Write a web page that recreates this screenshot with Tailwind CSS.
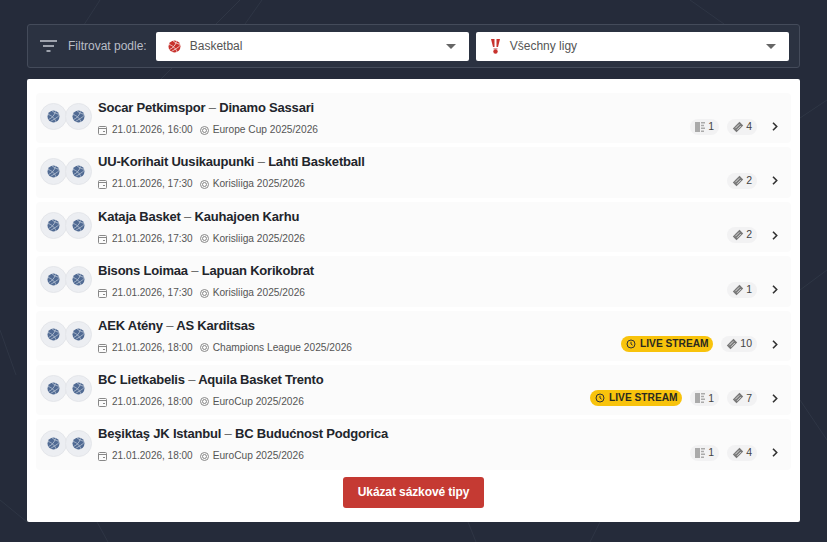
<!DOCTYPE html>
<html lang="cs">
<head>
<meta charset="utf-8">
<script src="https://cdn.jsdelivr.net/npm/@tailwindcss/browser@4"></script>
<title>Filtr</title>
</head>
<body class="relative w-[827px] h-[542px] overflow-hidden bg-[#252b3a] font-['Liberation_Sans',Arial,sans-serif]">
<svg class="absolute inset-0" width="827" height="542" fill="none" stroke="#2f3645" stroke-width="1">
  <path d="M60 62 L100 0"/><path d="M240 0 L160 80"/><path d="M262 0 L245 24"/><path d="M690 0 L724 24"/>
  <path d="M800 118 L827 100"/><path d="M800 400 L827 440"/><path d="M0 330 L16 375"/><path d="M800 290 L827 270"/>
  <path d="M97 522 L108 542"/><path d="M468 522 L476 542"/><path d="M600 522 L590 542"/><path d="M0 500 L27 522"/>
</svg>
<main class="relative px-[27px] pt-[24px]">
  <section class="h-[44px] rounded-[3px] border border-[#444b5a] bg-[#2b3241] flex items-center pl-[12px] pr-[10px]">
    <svg class="w-[17px] h-[14px] shrink-0" viewBox="0 0 17 14" fill="none" stroke="#c5c9d1" stroke-width="1.5"><path d="M0 2h17M3 7h11M6.5 12h4"/></svg>
    <span class="ml-[11px] text-[12px] text-[#b9bdc6] whitespace-nowrap">Filtrovat podle:</span>
    <div class="ml-[9px] flex gap-[7px] flex-1">
      <div class="w-[313px] h-[29px] bg-white rounded-[2px] flex items-center pl-[12px] pr-[13px]">
        <svg class="w-[13px] h-[13px]" viewBox="0 0 13 13" fill="none"><circle cx="6.5" cy="6.5" r="6" fill="#c8322d"/><path d="M1.5 9.5c3-1 6-4 7-8.2M3.5 11.5c3-2 7-4 8.5-6M1 4.5c3 .5 7 4 8 7.5M5 .8c1 1 4 3 7 3.5" stroke="#fff" stroke-width=".7"/></svg>
        <span class="ml-[9px] text-[12px] text-[#555]">Basketbal</span>
        <span class="ml-auto w-0 h-0 border-x-[5px] border-x-transparent border-t-[5px] border-t-[#666]"></span>
      </div>
      <div class="w-[313px] h-[29px] bg-white rounded-[2px] flex items-center pl-[14px] pr-[13px]">
        <svg class="w-[11px] h-[15px]" viewBox="0 0 11 15" fill="#c8322d"><path d="M1 0h3.5v8H3zM6.5 0H10L8 8H6.5z"/><rect x="3.5" y="9" width="4" height="1.5" fill="#d9a0a0"/><circle cx="5.5" cy="12.5" r="2.2"/></svg>
        <span class="ml-[9px] text-[12px] text-[#555]">Všechny ligy</span>
        <span class="ml-auto w-0 h-0 border-x-[5px] border-x-transparent border-t-[5px] border-t-[#666]"></span>
      </div>
    </div>
  </section>

  <section class="mt-[11px] h-[443px] bg-white rounded-[2px] px-[9px] pt-[14px] flex flex-col">
    <div class="flex flex-col gap-[4px]">

      <article class="h-[50.4px] bg-[#fbfbfb] rounded-[4px] flex pl-[4px] pr-[13px]">
        <div class="flex items-center -mt-[3px] -space-x-[2px]">
          <span class="w-[27px] h-[27px] rounded-full bg-[#eceef2] border border-[#e4e6ea] flex items-center justify-center"><svg class="w-[13px] h-[13px]" viewBox="0 0 13 13" fill="none"><circle cx="6.5" cy="6.5" r="6" fill="#506a93"/><path d="M1.5 9.5c3-1 6-4 7-8.2M3.5 11.5c3-2 7-4 8.5-6M1 4.5c3 .5 7 4 8 7.5M5 .8c1 1 4 3 7 3.5" stroke="#c9d2e0" stroke-width=".7"/></svg></span>
          <span class="w-[27px] h-[27px] rounded-full bg-[#eceef2] border border-[#e4e6ea] flex items-center justify-center"><svg class="w-[13px] h-[13px]" viewBox="0 0 13 13" fill="none"><circle cx="6.5" cy="6.5" r="6" fill="#506a93"/><path d="M1.5 9.5c3-1 6-4 7-8.2M3.5 11.5c3-2 7-4 8.5-6M1 4.5c3 .5 7 4 8 7.5M5 .8c1 1 4 3 7 3.5" stroke="#c9d2e0" stroke-width=".7"/></svg></span>
        </div>
        <div class="ml-[6px] pt-[6px]">
          <h3 class="text-[13px] tracking-[-0.2px] leading-[18px] font-bold text-[#22252b] whitespace-nowrap">Socar Petkimspor <span class="font-normal text-[#666]">–</span> Dinamo Sassari</h3>
          <p class="mt-[6px] flex items-center text-[10px] leading-[14px] text-[#555] whitespace-nowrap">
            <svg class="w-[9px] h-[10px] mr-[5px]" viewBox="0 0 9 10" fill="none" stroke="#888"><rect x=".5" y="1.5" width="8" height="8" rx="1"/><path d="M.5 3.5h8M5 6.5h2"/></svg>21.01.2026, 16:00
            <svg class="w-[9px] h-[9px] ml-[7px] mr-[4px]" viewBox="0 0 9 9" fill="none" stroke="#888"><circle cx="4.5" cy="4.5" r="4"/><circle cx="4.5" cy="4.5" r="2"/></svg><span class="text-[10.2px]">Europe Cup 2025/2026</span>
          </p>
        </div>
        <div class="ml-auto mt-[25px] flex items-center h-[17px] gap-[8px]">
          <span class="h-[16px] px-[5px] rounded-full bg-[#f2f2f3] flex items-center gap-[3px] text-[10.5px] text-[#444]"><svg class="w-[10px] h-[10px]" viewBox="0 0 10 10" fill="#aaa"><path d="M0 0h5v10H0zM6 0h4v1.5H6zM6 2.8h3V4.3H6zM6 5.6h4v1.5H6zM6 8.5h3V10H6z"/></svg>1</span>
          <span class="h-[16px] px-[5px] rounded-full bg-[#f2f2f3] flex items-center gap-[2px] text-[10.5px] text-[#444]"><svg class="w-[12px] h-[12px]" viewBox="0 0 12 12" fill="#777"><path d="M7.5.8 11.2 4.5 4.5 11.2.8 7.5z"/><path d="M3.3 7.3 7.3 3.3M5 8.8 8.8 5" stroke="#f2f2f3" stroke-width=".8"/></svg>4</span>
          <svg class="ml-[7px] w-[6px] h-[9px]" viewBox="0 0 6 9" fill="none" stroke="#333" stroke-width="1.6"><path d="M1 .8 4.7 4.5 1 8.2"/></svg>
        </div>
      </article>

      <article class="h-[50.4px] bg-[#fbfbfb] rounded-[4px] flex pl-[4px] pr-[13px]">
        <div class="flex items-center -mt-[3px] -space-x-[2px]">
          <span class="w-[27px] h-[27px] rounded-full bg-[#eceef2] border border-[#e4e6ea] flex items-center justify-center"><svg class="w-[13px] h-[13px]" viewBox="0 0 13 13" fill="none"><circle cx="6.5" cy="6.5" r="6" fill="#506a93"/><path d="M1.5 9.5c3-1 6-4 7-8.2M3.5 11.5c3-2 7-4 8.5-6M1 4.5c3 .5 7 4 8 7.5M5 .8c1 1 4 3 7 3.5" stroke="#c9d2e0" stroke-width=".7"/></svg></span>
          <span class="w-[27px] h-[27px] rounded-full bg-[#eceef2] border border-[#e4e6ea] flex items-center justify-center"><svg class="w-[13px] h-[13px]" viewBox="0 0 13 13" fill="none"><circle cx="6.5" cy="6.5" r="6" fill="#506a93"/><path d="M1.5 9.5c3-1 6-4 7-8.2M3.5 11.5c3-2 7-4 8.5-6M1 4.5c3 .5 7 4 8 7.5M5 .8c1 1 4 3 7 3.5" stroke="#c9d2e0" stroke-width=".7"/></svg></span>
        </div>
        <div class="ml-[6px] pt-[6px]">
          <h3 class="text-[13px] tracking-[-0.2px] leading-[18px] font-bold text-[#22252b] whitespace-nowrap">UU-Korihait Uusikaupunki <span class="font-normal text-[#666]">–</span> Lahti Basketball</h3>
          <p class="mt-[6px] flex items-center text-[10px] leading-[14px] text-[#555] whitespace-nowrap">
            <svg class="w-[9px] h-[10px] mr-[5px]" viewBox="0 0 9 10" fill="none" stroke="#888"><rect x=".5" y="1.5" width="8" height="8" rx="1"/><path d="M.5 3.5h8M5 6.5h2"/></svg>21.01.2026, 17:30
            <svg class="w-[9px] h-[9px] ml-[7px] mr-[4px]" viewBox="0 0 9 9" fill="none" stroke="#888"><circle cx="4.5" cy="4.5" r="4"/><circle cx="4.5" cy="4.5" r="2"/></svg><span class="text-[10.2px]">Korisliiga 2025/2026</span>
          </p>
        </div>
        <div class="ml-auto mt-[25px] flex items-center h-[17px] gap-[8px]">
          <span class="h-[16px] px-[5px] rounded-full bg-[#f2f2f3] flex items-center gap-[2px] text-[10.5px] text-[#444]"><svg class="w-[12px] h-[12px]" viewBox="0 0 12 12" fill="#777"><path d="M7.5.8 11.2 4.5 4.5 11.2.8 7.5z"/><path d="M3.3 7.3 7.3 3.3M5 8.8 8.8 5" stroke="#f2f2f3" stroke-width=".8"/></svg>2</span>
          <svg class="ml-[7px] w-[6px] h-[9px]" viewBox="0 0 6 9" fill="none" stroke="#333" stroke-width="1.6"><path d="M1 .8 4.7 4.5 1 8.2"/></svg>
        </div>
      </article>

      <article class="h-[50.4px] bg-[#fbfbfb] rounded-[4px] flex pl-[4px] pr-[13px]">
        <div class="flex items-center -mt-[3px] -space-x-[2px]">
          <span class="w-[27px] h-[27px] rounded-full bg-[#eceef2] border border-[#e4e6ea] flex items-center justify-center"><svg class="w-[13px] h-[13px]" viewBox="0 0 13 13" fill="none"><circle cx="6.5" cy="6.5" r="6" fill="#506a93"/><path d="M1.5 9.5c3-1 6-4 7-8.2M3.5 11.5c3-2 7-4 8.5-6M1 4.5c3 .5 7 4 8 7.5M5 .8c1 1 4 3 7 3.5" stroke="#c9d2e0" stroke-width=".7"/></svg></span>
          <span class="w-[27px] h-[27px] rounded-full bg-[#eceef2] border border-[#e4e6ea] flex items-center justify-center"><svg class="w-[13px] h-[13px]" viewBox="0 0 13 13" fill="none"><circle cx="6.5" cy="6.5" r="6" fill="#506a93"/><path d="M1.5 9.5c3-1 6-4 7-8.2M3.5 11.5c3-2 7-4 8.5-6M1 4.5c3 .5 7 4 8 7.5M5 .8c1 1 4 3 7 3.5" stroke="#c9d2e0" stroke-width=".7"/></svg></span>
        </div>
        <div class="ml-[6px] pt-[6px]">
          <h3 class="text-[13px] tracking-[-0.2px] leading-[18px] font-bold text-[#22252b] whitespace-nowrap">Kataja Basket <span class="font-normal text-[#666]">–</span> Kauhajoen Karhu</h3>
          <p class="mt-[6px] flex items-center text-[10px] leading-[14px] text-[#555] whitespace-nowrap">
            <svg class="w-[9px] h-[10px] mr-[5px]" viewBox="0 0 9 10" fill="none" stroke="#888"><rect x=".5" y="1.5" width="8" height="8" rx="1"/><path d="M.5 3.5h8M5 6.5h2"/></svg>21.01.2026, 17:30
            <svg class="w-[9px] h-[9px] ml-[7px] mr-[4px]" viewBox="0 0 9 9" fill="none" stroke="#888"><circle cx="4.5" cy="4.5" r="4"/><circle cx="4.5" cy="4.5" r="2"/></svg><span class="text-[10.2px]">Korisliiga 2025/2026</span>
          </p>
        </div>
        <div class="ml-auto mt-[25px] flex items-center h-[17px] gap-[8px]">
          <span class="h-[16px] px-[5px] rounded-full bg-[#f2f2f3] flex items-center gap-[2px] text-[10.5px] text-[#444]"><svg class="w-[12px] h-[12px]" viewBox="0 0 12 12" fill="#777"><path d="M7.5.8 11.2 4.5 4.5 11.2.8 7.5z"/><path d="M3.3 7.3 7.3 3.3M5 8.8 8.8 5" stroke="#f2f2f3" stroke-width=".8"/></svg>2</span>
          <svg class="ml-[7px] w-[6px] h-[9px]" viewBox="0 0 6 9" fill="none" stroke="#333" stroke-width="1.6"><path d="M1 .8 4.7 4.5 1 8.2"/></svg>
        </div>
      </article>

      <article class="h-[50.4px] bg-[#fbfbfb] rounded-[4px] flex pl-[4px] pr-[13px]">
        <div class="flex items-center -mt-[3px] -space-x-[2px]">
          <span class="w-[27px] h-[27px] rounded-full bg-[#eceef2] border border-[#e4e6ea] flex items-center justify-center"><svg class="w-[13px] h-[13px]" viewBox="0 0 13 13" fill="none"><circle cx="6.5" cy="6.5" r="6" fill="#506a93"/><path d="M1.5 9.5c3-1 6-4 7-8.2M3.5 11.5c3-2 7-4 8.5-6M1 4.5c3 .5 7 4 8 7.5M5 .8c1 1 4 3 7 3.5" stroke="#c9d2e0" stroke-width=".7"/></svg></span>
          <span class="w-[27px] h-[27px] rounded-full bg-[#eceef2] border border-[#e4e6ea] flex items-center justify-center"><svg class="w-[13px] h-[13px]" viewBox="0 0 13 13" fill="none"><circle cx="6.5" cy="6.5" r="6" fill="#506a93"/><path d="M1.5 9.5c3-1 6-4 7-8.2M3.5 11.5c3-2 7-4 8.5-6M1 4.5c3 .5 7 4 8 7.5M5 .8c1 1 4 3 7 3.5" stroke="#c9d2e0" stroke-width=".7"/></svg></span>
        </div>
        <div class="ml-[6px] pt-[6px]">
          <h3 class="text-[13px] tracking-[-0.2px] leading-[18px] font-bold text-[#22252b] whitespace-nowrap">Bisons Loimaa <span class="font-normal text-[#666]">–</span> Lapuan Korikobrat</h3>
          <p class="mt-[6px] flex items-center text-[10px] leading-[14px] text-[#555] whitespace-nowrap">
            <svg class="w-[9px] h-[10px] mr-[5px]" viewBox="0 0 9 10" fill="none" stroke="#888"><rect x=".5" y="1.5" width="8" height="8" rx="1"/><path d="M.5 3.5h8M5 6.5h2"/></svg>21.01.2026, 17:30
            <svg class="w-[9px] h-[9px] ml-[7px] mr-[4px]" viewBox="0 0 9 9" fill="none" stroke="#888"><circle cx="4.5" cy="4.5" r="4"/><circle cx="4.5" cy="4.5" r="2"/></svg><span class="text-[10.2px]">Korisliiga 2025/2026</span>
          </p>
        </div>
        <div class="ml-auto mt-[25px] flex items-center h-[17px] gap-[8px]">
          <span class="h-[16px] px-[5px] rounded-full bg-[#f2f2f3] flex items-center gap-[2px] text-[10.5px] text-[#444]"><svg class="w-[12px] h-[12px]" viewBox="0 0 12 12" fill="#777"><path d="M7.5.8 11.2 4.5 4.5 11.2.8 7.5z"/><path d="M3.3 7.3 7.3 3.3M5 8.8 8.8 5" stroke="#f2f2f3" stroke-width=".8"/></svg>1</span>
          <svg class="ml-[7px] w-[6px] h-[9px]" viewBox="0 0 6 9" fill="none" stroke="#333" stroke-width="1.6"><path d="M1 .8 4.7 4.5 1 8.2"/></svg>
        </div>
      </article>

      <article class="h-[50.4px] bg-[#fbfbfb] rounded-[4px] flex pl-[4px] pr-[13px]">
        <div class="flex items-center -mt-[3px] -space-x-[2px]">
          <span class="w-[27px] h-[27px] rounded-full bg-[#eceef2] border border-[#e4e6ea] flex items-center justify-center"><svg class="w-[13px] h-[13px]" viewBox="0 0 13 13" fill="none"><circle cx="6.5" cy="6.5" r="6" fill="#506a93"/><path d="M1.5 9.5c3-1 6-4 7-8.2M3.5 11.5c3-2 7-4 8.5-6M1 4.5c3 .5 7 4 8 7.5M5 .8c1 1 4 3 7 3.5" stroke="#c9d2e0" stroke-width=".7"/></svg></span>
          <span class="w-[27px] h-[27px] rounded-full bg-[#eceef2] border border-[#e4e6ea] flex items-center justify-center"><svg class="w-[13px] h-[13px]" viewBox="0 0 13 13" fill="none"><circle cx="6.5" cy="6.5" r="6" fill="#506a93"/><path d="M1.5 9.5c3-1 6-4 7-8.2M3.5 11.5c3-2 7-4 8.5-6M1 4.5c3 .5 7 4 8 7.5M5 .8c1 1 4 3 7 3.5" stroke="#c9d2e0" stroke-width=".7"/></svg></span>
        </div>
        <div class="ml-[6px] pt-[6px]">
          <h3 class="text-[13px] tracking-[-0.2px] leading-[18px] font-bold text-[#22252b] whitespace-nowrap">AEK Atény <span class="font-normal text-[#666]">–</span> AS Karditsas</h3>
          <p class="mt-[6px] flex items-center text-[10px] leading-[14px] text-[#555] whitespace-nowrap">
            <svg class="w-[9px] h-[10px] mr-[5px]" viewBox="0 0 9 10" fill="none" stroke="#888"><rect x=".5" y="1.5" width="8" height="8" rx="1"/><path d="M.5 3.5h8M5 6.5h2"/></svg>21.01.2026, 18:00
            <svg class="w-[9px] h-[9px] ml-[7px] mr-[4px]" viewBox="0 0 9 9" fill="none" stroke="#888"><circle cx="4.5" cy="4.5" r="4"/><circle cx="4.5" cy="4.5" r="2"/></svg><span class="text-[10.2px]">Champions League 2025/2026</span>
          </p>
        </div>
        <div class="ml-auto mt-[25px] flex items-center h-[17px] gap-[8px]">
          <span class="h-[16px] w-[92px] -mt-px rounded-full bg-[#f8c30c] flex items-center justify-center gap-[4px] text-[10.2px] font-bold text-[#2a2a20] whitespace-nowrap"><svg class="w-[10px] h-[10px]" viewBox="0 0 10 10" fill="none" stroke="#333" stroke-width="1"><circle cx="5" cy="5" r="4"/><path d="M5 2.8V5l1.6 1.2"/></svg>LIVE STREAM</span>
          <span class="h-[16px] px-[5px] rounded-full bg-[#f2f2f3] flex items-center gap-[2px] text-[10.5px] text-[#444]"><svg class="w-[12px] h-[12px]" viewBox="0 0 12 12" fill="#777"><path d="M7.5.8 11.2 4.5 4.5 11.2.8 7.5z"/><path d="M3.3 7.3 7.3 3.3M5 8.8 8.8 5" stroke="#f2f2f3" stroke-width=".8"/></svg>10</span>
          <svg class="ml-[7px] w-[6px] h-[9px]" viewBox="0 0 6 9" fill="none" stroke="#333" stroke-width="1.6"><path d="M1 .8 4.7 4.5 1 8.2"/></svg>
        </div>
      </article>

      <article class="h-[50.4px] bg-[#fbfbfb] rounded-[4px] flex pl-[4px] pr-[13px]">
        <div class="flex items-center -mt-[3px] -space-x-[2px]">
          <span class="w-[27px] h-[27px] rounded-full bg-[#eceef2] border border-[#e4e6ea] flex items-center justify-center"><svg class="w-[13px] h-[13px]" viewBox="0 0 13 13" fill="none"><circle cx="6.5" cy="6.5" r="6" fill="#506a93"/><path d="M1.5 9.5c3-1 6-4 7-8.2M3.5 11.5c3-2 7-4 8.5-6M1 4.5c3 .5 7 4 8 7.5M5 .8c1 1 4 3 7 3.5" stroke="#c9d2e0" stroke-width=".7"/></svg></span>
          <span class="w-[27px] h-[27px] rounded-full bg-[#eceef2] border border-[#e4e6ea] flex items-center justify-center"><svg class="w-[13px] h-[13px]" viewBox="0 0 13 13" fill="none"><circle cx="6.5" cy="6.5" r="6" fill="#506a93"/><path d="M1.5 9.5c3-1 6-4 7-8.2M3.5 11.5c3-2 7-4 8.5-6M1 4.5c3 .5 7 4 8 7.5M5 .8c1 1 4 3 7 3.5" stroke="#c9d2e0" stroke-width=".7"/></svg></span>
        </div>
        <div class="ml-[6px] pt-[6px]">
          <h3 class="text-[13px] tracking-[-0.2px] leading-[18px] font-bold text-[#22252b] whitespace-nowrap">BC Lietkabelis <span class="font-normal text-[#666]">–</span> Aquila Basket Trento</h3>
          <p class="mt-[6px] flex items-center text-[10px] leading-[14px] text-[#555] whitespace-nowrap">
            <svg class="w-[9px] h-[10px] mr-[5px]" viewBox="0 0 9 10" fill="none" stroke="#888"><rect x=".5" y="1.5" width="8" height="8" rx="1"/><path d="M.5 3.5h8M5 6.5h2"/></svg>21.01.2026, 18:00
            <svg class="w-[9px] h-[9px] ml-[7px] mr-[4px]" viewBox="0 0 9 9" fill="none" stroke="#888"><circle cx="4.5" cy="4.5" r="4"/><circle cx="4.5" cy="4.5" r="2"/></svg><span class="text-[10.2px]">EuroCup 2025/2026</span>
          </p>
        </div>
        <div class="ml-auto mt-[25px] flex items-center h-[17px] gap-[8px]">
          <span class="h-[16px] w-[92px] -mt-px rounded-full bg-[#f8c30c] flex items-center justify-center gap-[4px] text-[10.2px] font-bold text-[#2a2a20] whitespace-nowrap"><svg class="w-[10px] h-[10px]" viewBox="0 0 10 10" fill="none" stroke="#333" stroke-width="1"><circle cx="5" cy="5" r="4"/><path d="M5 2.8V5l1.6 1.2"/></svg>LIVE STREAM</span>
          <span class="h-[16px] px-[5px] rounded-full bg-[#f2f2f3] flex items-center gap-[3px] text-[10.5px] text-[#444]"><svg class="w-[10px] h-[10px]" viewBox="0 0 10 10" fill="#aaa"><path d="M0 0h5v10H0zM6 0h4v1.5H6zM6 2.8h3V4.3H6zM6 5.6h4v1.5H6zM6 8.5h3V10H6z"/></svg>1</span>
          <span class="h-[16px] px-[5px] rounded-full bg-[#f2f2f3] flex items-center gap-[2px] text-[10.5px] text-[#444]"><svg class="w-[12px] h-[12px]" viewBox="0 0 12 12" fill="#777"><path d="M7.5.8 11.2 4.5 4.5 11.2.8 7.5z"/><path d="M3.3 7.3 7.3 3.3M5 8.8 8.8 5" stroke="#f2f2f3" stroke-width=".8"/></svg>7</span>
          <svg class="ml-[7px] w-[6px] h-[9px]" viewBox="0 0 6 9" fill="none" stroke="#333" stroke-width="1.6"><path d="M1 .8 4.7 4.5 1 8.2"/></svg>
        </div>
      </article>

      <article class="h-[50.4px] bg-[#fbfbfb] rounded-[4px] flex pl-[4px] pr-[13px]">
        <div class="flex items-center -mt-[3px] -space-x-[2px]">
          <span class="w-[27px] h-[27px] rounded-full bg-[#eceef2] border border-[#e4e6ea] flex items-center justify-center"><svg class="w-[13px] h-[13px]" viewBox="0 0 13 13" fill="none"><circle cx="6.5" cy="6.5" r="6" fill="#506a93"/><path d="M1.5 9.5c3-1 6-4 7-8.2M3.5 11.5c3-2 7-4 8.5-6M1 4.5c3 .5 7 4 8 7.5M5 .8c1 1 4 3 7 3.5" stroke="#c9d2e0" stroke-width=".7"/></svg></span>
          <span class="w-[27px] h-[27px] rounded-full bg-[#eceef2] border border-[#e4e6ea] flex items-center justify-center"><svg class="w-[13px] h-[13px]" viewBox="0 0 13 13" fill="none"><circle cx="6.5" cy="6.5" r="6" fill="#506a93"/><path d="M1.5 9.5c3-1 6-4 7-8.2M3.5 11.5c3-2 7-4 8.5-6M1 4.5c3 .5 7 4 8 7.5M5 .8c1 1 4 3 7 3.5" stroke="#c9d2e0" stroke-width=".7"/></svg></span>
        </div>
        <div class="ml-[6px] pt-[6px]">
          <h3 class="text-[13px] tracking-[-0.2px] leading-[18px] font-bold text-[#22252b] whitespace-nowrap">Beşiktaş JK Istanbul <span class="font-normal text-[#666]">–</span> BC Budućnost Podgorica</h3>
          <p class="mt-[6px] flex items-center text-[10px] leading-[14px] text-[#555] whitespace-nowrap">
            <svg class="w-[9px] h-[10px] mr-[5px]" viewBox="0 0 9 10" fill="none" stroke="#888"><rect x=".5" y="1.5" width="8" height="8" rx="1"/><path d="M.5 3.5h8M5 6.5h2"/></svg>21.01.2026, 18:00
            <svg class="w-[9px] h-[9px] ml-[7px] mr-[4px]" viewBox="0 0 9 9" fill="none" stroke="#888"><circle cx="4.5" cy="4.5" r="4"/><circle cx="4.5" cy="4.5" r="2"/></svg><span class="text-[10.2px]">EuroCup 2025/2026</span>
          </p>
        </div>
        <div class="ml-auto mt-[25px] flex items-center h-[17px] gap-[8px]">
          <span class="h-[16px] px-[5px] rounded-full bg-[#f2f2f3] flex items-center gap-[3px] text-[10.5px] text-[#444]"><svg class="w-[10px] h-[10px]" viewBox="0 0 10 10" fill="#aaa"><path d="M0 0h5v10H0zM6 0h4v1.5H6zM6 2.8h3V4.3H6zM6 5.6h4v1.5H6zM6 8.5h3V10H6z"/></svg>1</span>
          <span class="h-[16px] px-[5px] rounded-full bg-[#f2f2f3] flex items-center gap-[2px] text-[10.5px] text-[#444]"><svg class="w-[12px] h-[12px]" viewBox="0 0 12 12" fill="#777"><path d="M7.5.8 11.2 4.5 4.5 11.2.8 7.5z"/><path d="M3.3 7.3 7.3 3.3M5 8.8 8.8 5" stroke="#f2f2f3" stroke-width=".8"/></svg>4</span>
          <svg class="ml-[7px] w-[6px] h-[9px]" viewBox="0 0 6 9" fill="none" stroke="#333" stroke-width="1.6"><path d="M1 .8 4.7 4.5 1 8.2"/></svg>
        </div>
      </article>
    </div>
    <button class="mt-[7px] self-center w-[141px] h-[31px] bg-[#c53a33] rounded-[3px] text-white text-[12px] tracking-[-0.1px] font-bold">Ukázat sázkové tipy</button>
  </section>
</main>
</body>
</html>
